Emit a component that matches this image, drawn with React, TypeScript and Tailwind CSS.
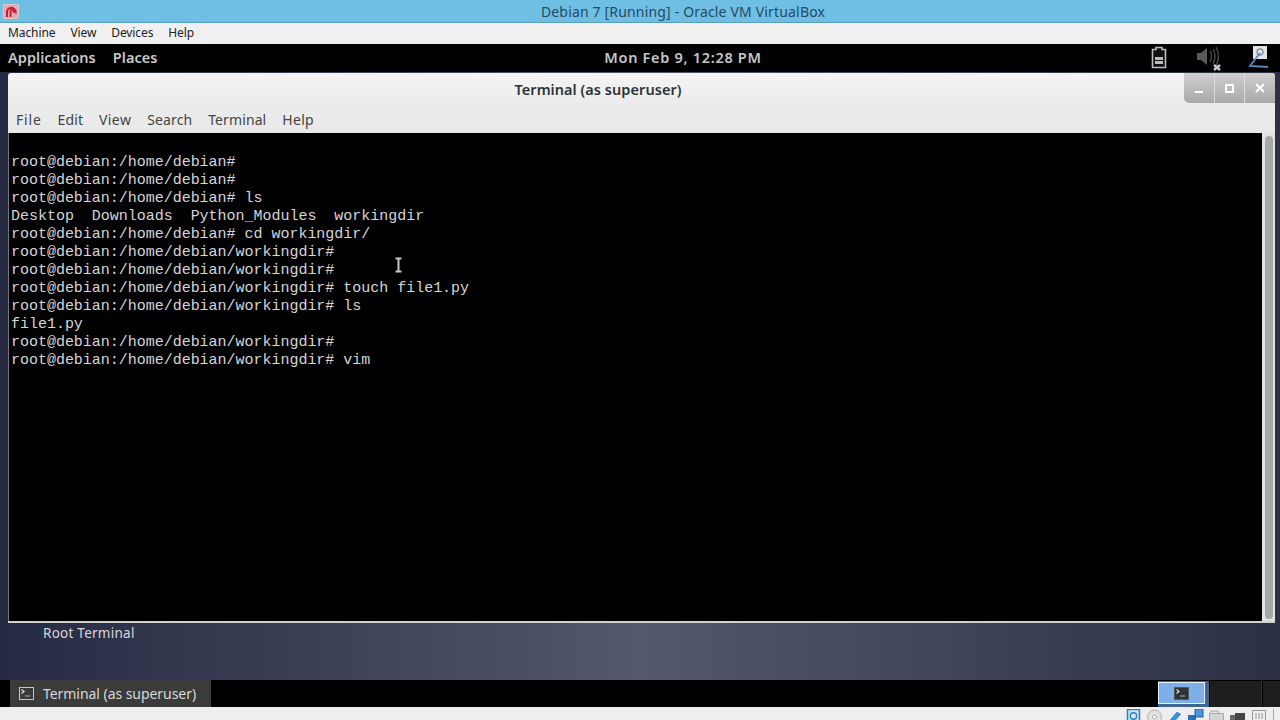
import React from "react";

const lines = [
  "root@debian:/home/debian#",
  "root@debian:/home/debian#",
  "root@debian:/home/debian# ls",
  "Desktop  Downloads  Python_Modules  workingdir",
  "root@debian:/home/debian# cd workingdir/",
  "root@debian:/home/debian/workingdir#",
  "root@debian:/home/debian/workingdir#",
  "root@debian:/home/debian/workingdir# touch file1.py",
  "root@debian:/home/debian/workingdir# ls",
  "file1.py",
  "root@debian:/home/debian/workingdir#",
  "root@debian:/home/debian/workingdir# vim",
];

function TermIcon({ light }: { light?: boolean }) {
  return (
    <svg width="15" height="13" viewBox="0 0 15 13">
      <rect x="0.5" y="0.5" width="14" height="12" fill={light ? "#2e3436" : "#3a3a3a"} stroke={light ? "#555" : "#c4c4c4"} />
      <path d="M2.5 2.5l2.5 2-2.5 2" fill="none" stroke="#e0e0e0" strokeWidth="1.2" />
      <path d="M6 9h5" stroke="#8a8a8a" strokeWidth="1.5" />
    </svg>
  );
}

export default function App() {
  return (
    <div className="w-[1280px] h-[720px] flex flex-col overflow-hidden font-['Noto_Sans',sans-serif]">
      <div className="h-[23px] shrink-0 bg-[#6fbee4] border-b border-[#5a9dbd] relative flex items-center justify-center pl-[86px] text-[14px] tracking-[0.17px] text-[#244a5f]">
        <svg className="absolute left-[3px] top-[4px]" width="16" height="15" viewBox="0 0 16 15">
          <rect width="16" height="15" rx="1" fill="#d9c6c6" />
          <rect x="1" y="1" width="14" height="13" fill="#e8a8b0" />
          <path d="M4 13 V7 A4.2 4.2 0 1 1 12.5 9.5 M7.5 13 V7.5 A1.6 1.6 0 1 1 10 8.5" fill="none" stroke="#c41e3a" strokeWidth="2" />
        </svg>
        Debian 7 [Running] - Oracle VM VirtualBox
      </div>
      <div className="h-[21px] shrink-0 bg-[#f0f0f0] flex items-center gap-[15px] pl-[8px] pb-[1px] text-[12px] tracking-[-0.1px] text-[#222]">
        <span>Machine</span>
        <span>View</span>
        <span>Devices</span>
        <span>Help</span>
      </div>
      <div className="h-[28px] shrink-0 bg-black relative flex items-center justify-center pl-[86px] pb-[1px] text-[14.5px] tracking-[0.05px] font-semibold text-[#c8c8c8]">
        <div className="absolute left-[8px] top-[3px] flex gap-[17px]">
          <span>Applications</span>
          <span>Places</span>
        </div>
        <span className="tracking-[0.7px]">Mon Feb 9, 12:28 PM</span>
        <svg className="absolute left-[1151px] top-[1px]" width="16" height="24" viewBox="0 0 16 24">
          <path d="M5 2.5h6v2h3.5v18h-13v-18H5z" fill="#111" stroke="#bdbdbd" strokeWidth="1.6" />
          <rect x="4" y="12" width="8" height="3" fill="#bdbdbd" />
          <rect x="4" y="16" width="8" height="3" fill="#bdbdbd" />
        </svg>
        <svg className="absolute left-[1196px] top-[1px]" width="28" height="26" viewBox="0 0 28 26">
          <path d="M1 8h4l6-5v17l-6-5H1z" fill="#5a5a5a" />
          <path d="M14 6q3 5 0 11M17 4q4 7 0 15M20 2q5 9 0 19" fill="none" stroke="#484848" strokeWidth="1.5" />
          <path d="M18 20l6 5M24 20l-6 5" stroke="#c8c8c8" strokeWidth="2.4" />
        </svg>
        <svg className="absolute left-[1247px] top-[1px]" width="22" height="25" viewBox="0 0 22 25">
          <rect x="6" y="1" width="14" height="13" fill="#e4e4e4" />
          <circle cx="13" cy="7" r="3" fill="none" stroke="#8090b0" strokeWidth="1.4" />
          <path d="M13 8L3 21l18 1" fill="none" stroke="#5b86c4" strokeWidth="1.8" />
        </svg>
      </div>
      <div className="flex-1 min-h-0 pt-[1px] pl-[8px] pr-[5px] bg-gradient-to-r from-[#262a42] via-[#53586e] to-[#2b3045]">
        <div className="h-[550px] flex flex-col rounded-t-[3px] overflow-hidden border-b-2 border-[#d0d0d0]">
          <div className="h-[60px] shrink-0 bg-gradient-to-b from-[#f4f4f4] via-[#ececec] to-[#e9e9e9] relative flex flex-col">
            <div className="h-[33px] flex items-center justify-center pr-[87px] text-[14.5px] tracking-[0.05px] font-semibold text-[#2e3436]">
              Terminal (as superuser)
            </div>
            <div className="flex gap-[16px] pl-[8px] pt-[3px] text-[14px] text-[#444] tracking-[0.1px]">
              <span className="tracking-[0.8px]">File</span>
              <span>Edit</span>
              <span className="tracking-[0.4px]">View</span>
              <span>Search</span>
              <span>Terminal</span>
              <span className="tracking-[0.3px]">Help</span>
            </div>
            <div className="absolute right-0 top-0 w-[91px] h-[30px] rounded-bl-[5px] rounded-tr-[3px] bg-gradient-to-b from-[#cfcfcf] to-[#a9a9a9] flex text-white">
              <div className="flex-1 flex items-center justify-center border-r border-[#dcdcdc]">
                <div className="w-[8px] h-[2px] bg-white mt-[8px]" />
              </div>
              <div className="flex-1 flex items-center justify-center border-r border-[#dcdcdc]">
                <div className="w-[9px] h-[9px] border-2 border-white" />
              </div>
              <div className="flex-1 flex items-center justify-center">
                <svg width="10" height="10" viewBox="0 0 10 10">
                  <path d="M1 1l8 8M9 1l-8 8" stroke="#fff" strokeWidth="2" />
                </svg>
              </div>
            </div>
          </div>
          <div className="flex-1 min-h-0 flex">
            <div className="flex-1 relative bg-black border-l border-[#777]">
              <pre className="pt-[21px] pl-[2px] font-['Liberation_Mono',monospace] text-[15px] leading-[18px] text-[#d6d6d6] tracking-[-0.02px]">
                {lines.join("\n")}
              </pre>
              <svg className="absolute left-[385px] top-[124px]" width="9" height="16" viewBox="0 0 9 16">
                <path d="M1.5 1.5h6M1.5 14.5h6M4.5 1.5v13" stroke="#c8c8c8" strokeWidth="2" fill="none" />
              </svg>
            </div>
            <div className="w-[13px] shrink-0 bg-[#e2e2e2] flex justify-center pt-[3px] pb-[2px]">
              <div className="w-[8px] h-full rounded-full bg-[#a6a8a8]" />
            </div>
          </div>
        </div>
        <div className="pl-[35px] text-[13.5px] tracking-[0.25px] text-[#d8d8d8]">Root Terminal</div>
      </div>
      <div className="h-[27px] shrink-0 bg-black relative flex">
        <div className="ml-[10px] w-[201px] h-full bg-[#3b3b3b] flex items-center gap-[9px] pl-[9px] text-[14px] tracking-[-0.05px] text-[#d8d8d8]">
          <TermIcon />
          <span>Terminal (as superuser)</span>
        </div>
        <div className="absolute left-[1158px] top-[1px] w-[51px] h-[26px] bg-[#3f6690] pt-[1px] pb-[3px] pr-[4px]">
          <div className="w-full h-full bg-[#7db0e8] border border-[#e8f0f8] flex items-center justify-center">
            <TermIcon light />
          </div>
        </div>
        <div className="absolute left-[1210px] top-[1px] w-[52px] h-[26px] bg-[#1e1e1e] border-r border-[#333]" />
        <div className="absolute left-[1263px] top-[1px] w-[17px] h-[26px] bg-[#1e1e1e]" />
      </div>
      <div className="h-[13px] shrink-0 bg-[#eeeeee] relative overflow-hidden">
        <svg className="absolute left-[1126px] top-[2px]" width="154" height="18" viewBox="0 0 154 18">
          <rect x="1.5" y="0.5" width="12" height="13" fill="#cfe6f5" stroke="#2d7fc0" strokeWidth="1.5" />
          <circle cx="7.5" cy="7" r="3.2" fill="none" stroke="#2d7fc0" strokeWidth="1.4" />
          <circle cx="28.5" cy="8" r="7" fill="#e2e2e2" stroke="#b0b0b0" />
          <circle cx="28.5" cy="8" r="2" fill="#fff" stroke="#aaa" />
          <path d="M43 11l8-9 5 3-8 9z" fill="#3d8fd8" stroke="#fff" />
          <rect x="62" y="6" width="8" height="8" fill="#2d6fb8" />
          <rect x="69" y="0" width="8" height="8" fill="#4b95dc" stroke="#1f5f9e" />
          <path d="M83.5 4.5h14v9h-14z" fill="#d4d4d4" stroke="#aaa" />
          <path d="M84 4l1-2h7l1 2" fill="#e4e4e4" stroke="#aaa" />
          <rect x="109" y="4" width="10" height="9" fill="#444" />
          <rect x="104" y="6" width="5" height="6" fill="#666" />
          <rect x="126.5" y="1.5" width="13" height="12" fill="#eee" stroke="#999" />
          <path d="M130 4v6M133 4v6M136 4v6" stroke="#999" />
          <path d="M147.5 0v16" stroke="#aaa" />
        </svg>
      </div>
    </div>
  );
}
